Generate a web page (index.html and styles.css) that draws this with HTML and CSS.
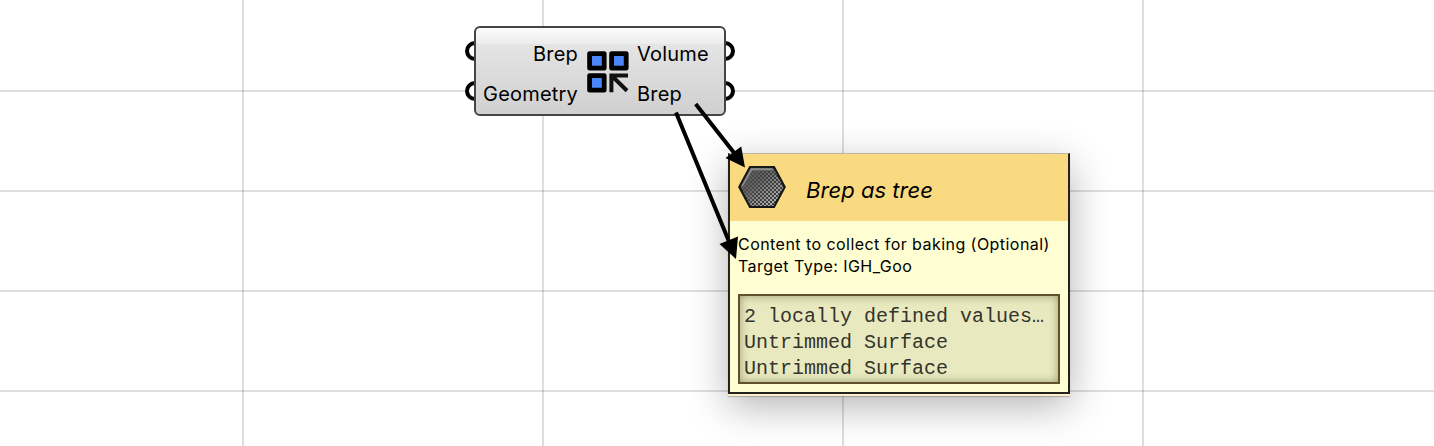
FILE: index.html
```html
<!DOCTYPE html>
<html lang="en">
<head>
<meta charset="utf-8">
<title>Brep as tree</title>
<link rel="stylesheet" href="styles.css">
</head>
<body>
<main class="canvas">
  <section class="node">
    <svg class="ports" width="272" height="90" viewBox="-10 0 272 90">
      <g class="port"><circle cx="1" cy="25" r="8"/><circle cx="1" cy="65" r="8"/><circle cx="251" cy="25" r="8"/><circle cx="251" cy="65" r="8"/></g>
    </svg>
    <div class="node-body">
      <div class="inputs"><span>Brep</span><span class="geometry">Geometry</span></div>
      <svg class="node-icon" width="44" height="44" viewBox="0 0 44 44">
        <g class="cells"><rect x="3.6" y="3.6" width="14.6" height="14.6"/><rect x="25.6" y="3.6" width="14.6" height="14.6"/><rect x="3.6" y="25.6" width="14.6" height="14.6"/></g>
        <path class="pointer" d="M25.4 42.3V25.6H42M26.5 26.5L41 40.7"/>
      </svg>
      <div class="outputs"><span>Volume</span><span>Brep</span></div>
    </div>
  </section>

  <section class="tooltip">
    <header class="tooltip-head">
      <svg class="hex" width="48" height="44" viewBox="0 0 48 44">
        <defs>
          <linearGradient id="shade" x1="0" y1="0" x2="1" y2="1"><stop offset="0" stop-color="#5c5c5c"/><stop offset=".35" stop-color="#606060"/><stop offset="1" stop-color="#cfcfcf"/></linearGradient>
          <linearGradient id="fade" x1="0" y1="0" x2="1" y2=".5"><stop offset="0" stop-color="#fff" stop-opacity=".1"/><stop offset=".6" stop-color="#fff" stop-opacity=".9"/><stop offset="1" stop-color="#fff"/></linearGradient>
          <pattern id="checker" width="4" height="4" patternUnits="userSpaceOnUse"><path d="M0 0h2v2H0zM2 2h2v2H2z" fill="#3a3a3a"/></pattern>
          <mask id="checkmask"><rect width="48" height="44" fill="url(#fade)"/></mask>
        </defs>
        <path d="M12 2H36L47 22L36 42H12L1 22Z" fill="url(#shade)"/>
        <path d="M12 2H36L47 22L36 42H12L1 22Z" fill="url(#checker)" mask="url(#checkmask)"/>
        <path d="M4 21L13.5 4.2H34.5" fill="none" stroke="#8c8c8c" stroke-width="2"/>
        <path d="M12 2H36L46.7 22L36 42H12L1.3 22Z" fill="none" stroke="#171717" stroke-width="2.2"/>
      </svg>
      <h1 class="title">Brep as tree</h1>
    </header>
    <div class="tooltip-body">
      <p class="desc"><span class="desc-line">Content to collect for baking (Optional)</span><span class="desc-type">Target Type: IGH_Goo</span></p>
      <div class="values"><span>2 locally defined values…</span><span>Untrimmed Surface</span><span>Untrimmed Surface</span></div>
    </div>
  </section>

  <svg class="arrows" width="1434" height="446" viewBox="0 0 1434 446">
    <path class="shaft" d="M695.7 104L735 154M676 112.5L730 244"/>
    <path d="M745 167.5L725.5 158L741.2 146.5ZM736 259L719.5 244L738 236.5Z"/>
  </svg>
</main>
</body>
</html>
```
FILE: styles.css
```css
body {
  margin: 0;
}

.canvas {
  position: relative;
  width: 1434px;
  height: 446px;
  overflow: hidden;
  background-color: #fff;
  background-image:
    linear-gradient(90deg, rgba(0, 0, 0, .13) 2px, transparent 2px),
    linear-gradient(rgba(0, 0, 0, .13) 2px, transparent 2px);
  background-size: 300px 100px;
  background-position: 242px 90px;
  font-family: Inter, "Noto Sans", sans-serif;
  color: #000;
}

.node {
  position: absolute;
  left: 474px;
  top: 26px;
  width: 252px;
  height: 90px;
}

.ports {
  position: absolute;
  left: -10px;
  top: 0;
}

.port {
  fill: #fff;
  stroke: #000;
  stroke-width: 4px;
}

.node-body {
  position: relative;
  display: flex;
  box-sizing: border-box;
  height: 100%;
  padding: 6px 0 0 7px;
  border: 2px solid #444;
  border-radius: 6px;
  background: linear-gradient(#fbfbfb 0, #ececec 16px, #e4e4e4 16px, #d0d0d0 100%);
  font-size: 20px;
  line-height: 40px;
  letter-spacing: .2px;
}

.inputs,
.outputs {
  display: flex;
  flex-direction: column;
}

.inputs {
  width: 95px;
  align-items: flex-end;
}

.node-icon {
  margin: 16px 7px 0 8px;
}

.cells {
  fill: #4a86f7;
  stroke: #000;
  stroke-width: 4.8px;
  stroke-linejoin: round;
}

.pointer {
  fill: none;
  stroke: #111;
  stroke-width: 4px;
}

.tooltip {
  position: absolute;
  left: 728px;
  top: 153px;
  box-sizing: border-box;
  width: 342px;
  height: 241px;
  border: 2px solid #25221e;
  border-top: 1px solid #bcb6a8;
  background: #fffed2;
  box-shadow: 0 2px 0 #fdf0cc, 0 3px 1px rgba(0, 0, 0, .2), 0 12px 38px rgba(0, 0, 0, .3);
}

.tooltip-head {
  display: flex;
  height: 67px;
  padding-left: 8px;
  background: #fada80;
}

.hex {
  margin-top: 11px;
}

.title {
  margin: 3px 0 0 20px;
  font-size: 22px;
  font-weight: 400;
  font-style: italic;
  line-height: 66px;
  letter-spacing: .05px;
}

.tooltip-body {
  padding: 12px 8px 0;
}

.desc {
  display: flex;
  flex-direction: column;
  margin: 0;
  font-size: 16px;
  line-height: 22px;
  letter-spacing: .45px;
  white-space: nowrap;
}

.values {
  display: flex;
  flex-direction: column;
  box-sizing: border-box;
  height: 90px;
  margin-top: 17px;
  padding: 8px 4px 0;
  border: 2px solid #61502c;
  background: #e9e9c0;
  box-shadow: inset 0 0 9px rgba(80, 80, 40, .5);
  color: #34342c;
  font-family: "Courier New", "Liberation Mono", monospace;
  font-size: 20px;
  line-height: 26px;
  white-space: nowrap;
}

.arrows {
  position: absolute;
  left: 0;
  top: 0;
}

.shaft {
  stroke: #000;
  stroke-width: 4px;
}
```
